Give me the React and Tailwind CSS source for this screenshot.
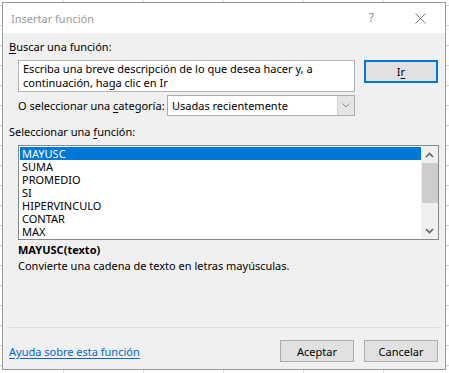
import React from "react";

const items = ["MAYUSC", "SUMA", "PROMEDIO", "SI", "HIPERVINCULO", "CONTAR", "MAX"];

function Chevron({ up, className = "" }) {
  return (
    <svg width="9" height="6" viewBox="0 0 9 6" className={className}>
      <path
        d={up ? "M1 5 L4.5 1.5 L8 5" : "M1 1 L4.5 4.5 L8 1"}
        fill="none"
        stroke="#606060"
        strokeWidth="1.6"
      />
    </svg>
  );
}

export default function App() {
  return (
    <div className="relative w-[449px] h-[373px] overflow-hidden bg-white bg-[linear-gradient(to_right,#d6d6d6_1px,transparent_1px),linear-gradient(to_bottom,#d6d6d6_1px,transparent_1px)] bg-[size:80px_20px] bg-[position:63px_5px] font-['Noto_Sans','Open_Sans',sans-serif] text-[11px] text-black">
      <div className="ml-[2px] mt-[2px] w-[444px] h-[368px] border border-[#9b9b9b] bg-[#f0f0f0] flex flex-col">
        {/* title bar */}
        <div className="h-[30px] bg-white flex items-center shrink-0">
          <span className="pl-[8px] text-[11px] text-[#9a9a9a] leading-none">Insertar función</span>
          <span className="ml-auto mr-[41px] text-[12px] text-[#8a8a8a] leading-none">?</span>
          <svg width="11" height="11" viewBox="0 0 11 11" className="mr-[19px]">
            <path d="M0.5 0.5 L10.5 10.5 M10.5 0.5 L0.5 10.5" stroke="#7a7a7a" strokeWidth="1" fill="none" />
          </svg>
        </div>
        {/* body */}
        <div className="flex-1 flex flex-col pl-[6px] pr-[7px]">
          <div className="mt-[6px] h-[16px] leading-[16px]">
            <span className="underline underline-offset-2">B</span>uscar una función:
          </div>
          <div className="mt-[5px] flex items-start">
            <div className="ml-[9px] w-[337px] h-[32px] bg-white border border-[#b4b4b4] pl-[4px] pt-[1px] leading-[14px]">
              Escriba una breve descripción de lo que desea hacer y, a
              <br />
              continuación, haga clic en Ir
            </div>
            <div className="ml-[9px] w-[74px] h-[23px] border-2 border-[#0078d7] bg-[#e1e1e1] flex items-center justify-center leading-none">
              <span>I<span className="underline underline-offset-2">r</span></span>
            </div>
          </div>
          <div className="mt-[3px] flex items-center">
            <span className="ml-[9px] w-[149px] shrink-0 whitespace-nowrap leading-none">
              O seleccionar una <span className="underline underline-offset-2">c</span>ategoría:
            </span>
            <div className="w-[188px] h-[21px] border border-[#adadad] bg-white flex items-stretch">
              <span className="flex-1 pl-[4px] flex items-center leading-none whitespace-nowrap">Usadas recientemente</span>
              <div className="w-[17px] bg-[#e5e5e5] border-l border-[#d0d0d0] flex items-center justify-center">
                <svg width="8" height="5" viewBox="0 0 8 5">
                  <path d="M0.5 0.5 L4 4 L7.5 0.5" fill="none" stroke="#8a8a8a" strokeWidth="1" />
                </svg>
              </div>
            </div>
          </div>
          <div className="mt-[8px] h-[16px] leading-[16px]">
            Seleccionar una <span className="underline underline-offset-2">f</span>unción:
          </div>
          <div className="mt-[5px] ml-[9px] w-[421px] h-[95px] shrink-0 border border-[#828790] bg-white flex">
            <div className="flex-1 pt-[1px] pl-[1px] flex flex-col">
              {items.map((it, i) => (
                <div
                  key={it}
                  className={
                    "h-[13px] leading-[13px] pl-[2px] overflow-hidden " +
                    (i === 0 ? "bg-[#0078d7] text-white" : "")
                  }
                >
                  {it}
                </div>
              ))}
            </div>
            <div className="w-[17px] bg-[#f0f0f0] flex flex-col items-center">
              <div className="h-[17px] flex items-center justify-center">
                <Chevron up />
              </div>
              <div className="w-[16px] h-[40px] bg-[#cdcdcd]" />
              <div className="mt-auto h-[17px] flex items-center justify-center">
                <Chevron />
              </div>
            </div>
          </div>
          <div className="mt-[2px] ml-[9px] h-[16px] leading-[16px] font-bold">MAYUSC(texto)</div>
          <div className="ml-[9px] h-[16px] leading-[16px]">
            Convierte una cadena de texto en letras mayúsculas.
          </div>
          <div className="mt-[53px] w-[430px] h-px bg-[#dcdcdc]" />
          <div className="mt-[12px] flex items-center">
            <a className="text-[#0066cc] underline underline-offset-2 leading-none">
              Ayuda sobre esta función
            </a>
            <div className="ml-auto w-[74px] h-[22px] border border-[#adadad] bg-[#e1e1e1] flex items-center justify-center leading-none">
              Aceptar
            </div>
            <div className="ml-[10px] w-[74px] h-[22px] border border-[#adadad] bg-[#e1e1e1] flex items-center justify-center leading-none">
              Cancelar
            </div>
          </div>
        </div>
      </div>
    </div>
  );
}
